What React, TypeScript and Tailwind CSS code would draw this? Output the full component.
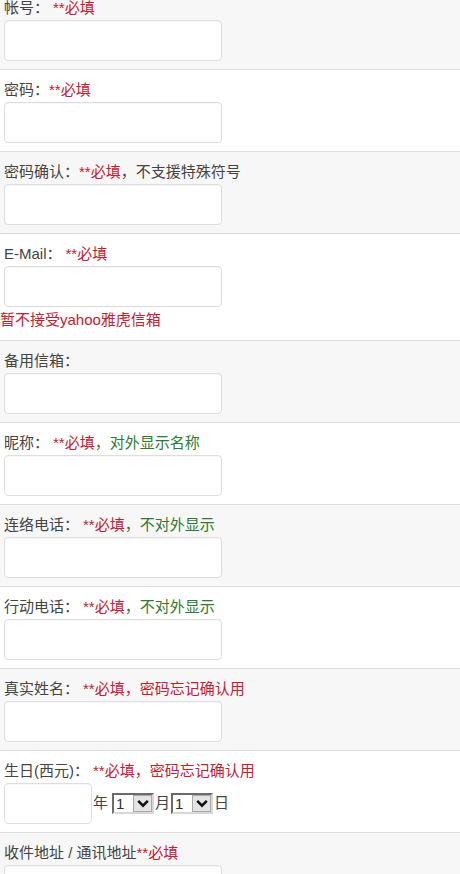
import React from "react";

type Note = { text: string; tone: "red" | "green" | "gray" };

type Field = {
  label: string;
  gap?: boolean;
  notes: Note[];
  hint?: string;
  birthday?: boolean;
};

const fields: Field[] = [
  { label: "帐号：", gap: true, notes: [{ text: "**必填", tone: "red" }] },
  { label: "密码：", notes: [{ text: "**必填", tone: "red" }] },
  {
    label: "密码确认：",
    notes: [
      { text: "**必填", tone: "red" },
      { text: "，不支援特殊符号", tone: "gray" },
    ],
  },
  {
    label: "E-Mail：",
    gap: true,
    notes: [{ text: "**必填", tone: "red" }],
    hint: "暂不接受yahoo雅虎信箱",
  },
  { label: "备用信箱：", notes: [] },
  {
    label: "昵称：",
    gap: true,
    notes: [
      { text: "**必填", tone: "red" },
      { text: "，对外显示名称", tone: "green" },
    ],
  },
  {
    label: "连络电话：",
    gap: true,
    notes: [
      { text: "**必填", tone: "red" },
      { text: "，不对外显示", tone: "green" },
    ],
  },
  {
    label: "行动电话：",
    gap: true,
    notes: [
      { text: "**必填", tone: "red" },
      { text: "，不对外显示", tone: "green" },
    ],
  },
  {
    label: "真实姓名：",
    gap: true,
    notes: [
      { text: "**必填", tone: "red" },
      { text: "，密码忘记确认用", tone: "red" },
    ],
  },
  {
    label: "生日(西元)：",
    gap: true,
    birthday: true,
    notes: [
      { text: "**必填", tone: "red" },
      { text: "，密码忘记确认用", tone: "red" },
    ],
  },
  { label: "收件地址 / 通讯地址", notes: [{ text: "**必填", tone: "red" }] },
];

const toneClass = {
  red: "text-[#c42033]",
  green: "text-[#2f7a32]",
  gray: "text-[#444]",
};

const DropSelect = () => (
  <span className="inline-flex h-[21px] w-[42px] items-stretch border-2 border-t-[#6b6b6b] border-l-[#6b6b6b] border-r-[#d8d8d8] border-b-[#d8d8d8] bg-white">
    <span className="flex-1 pl-[2px] text-[15px] leading-[17px] text-[#333]">1</span>
    <span className="flex w-[19px] items-center justify-center border border-[#aaa] bg-[#e4e4e4]">
      <svg width="12" height="9" viewBox="0 0 12 9">
        <path d="M1.2 1.8 L6 6.6 L10.8 1.8" fill="none" stroke="#111" strokeWidth="2.6" />
      </svg>
    </span>
  </span>
);

const TextBox = ({ w = "w-[218px]" }: { w?: string }) => (
  <input
    type="text"
    className={`${w} h-[41px] rounded-[4px] border border-[#dedede] bg-white shadow-[inset_0_1px_1px_rgba(0,0,0,0.03)] outline-none`}
  />
);

const Row = ({ field, shaded }: { field: Field; shaded: boolean }) => (
  <div
    className={`border-b border-[#dddddd] pt-[10px] ${field.hint ? "pb-[10px]" : "pb-[8px]"} ${
      shaded ? "bg-[#f7f7f7]" : "bg-white"
    }`}
  >
    <div className="px-[4px] text-[15px] leading-[20px] text-[#444]">
      {field.label}
      {field.gap && <span className="inline-block w-[4px]" />}
      {field.notes.map((n, i) => (
        <span key={i} className={toneClass[n.tone]}>
          {n.text}
        </span>
      ))}
    </div>
    {field.birthday ? (
      <div className="mt-[2px] flex items-center pl-[4px] text-[15px] text-[#444]">
        <TextBox w="w-[88px]" />
        <span className="ml-[1px] mr-[4px]">年</span>
        <DropSelect />
        <span className="mx-[1px]">月</span>
        <DropSelect />
        <span className="ml-[1px]">日</span>
      </div>
    ) : (
      <div className="mt-[2px] flex pl-[4px]">
        <TextBox />
      </div>
    )}
    {field.hint && (
      <div className="mt-[3px] text-[15px] leading-[20px] text-[#c42033]">{field.hint}</div>
    )}
  </div>
);

export default function App() {
  return (
    <div className="h-[874px] w-[460px] overflow-hidden bg-white font-['Liberation_Sans','Noto_Sans_CJK_SC',sans-serif]">
      <div className="-mt-[12px]">
        {fields.map((f, i) => (
          <Row key={f.label} field={f} shaded={i % 2 === 0} />
        ))}
      </div>
    </div>
  );
}
